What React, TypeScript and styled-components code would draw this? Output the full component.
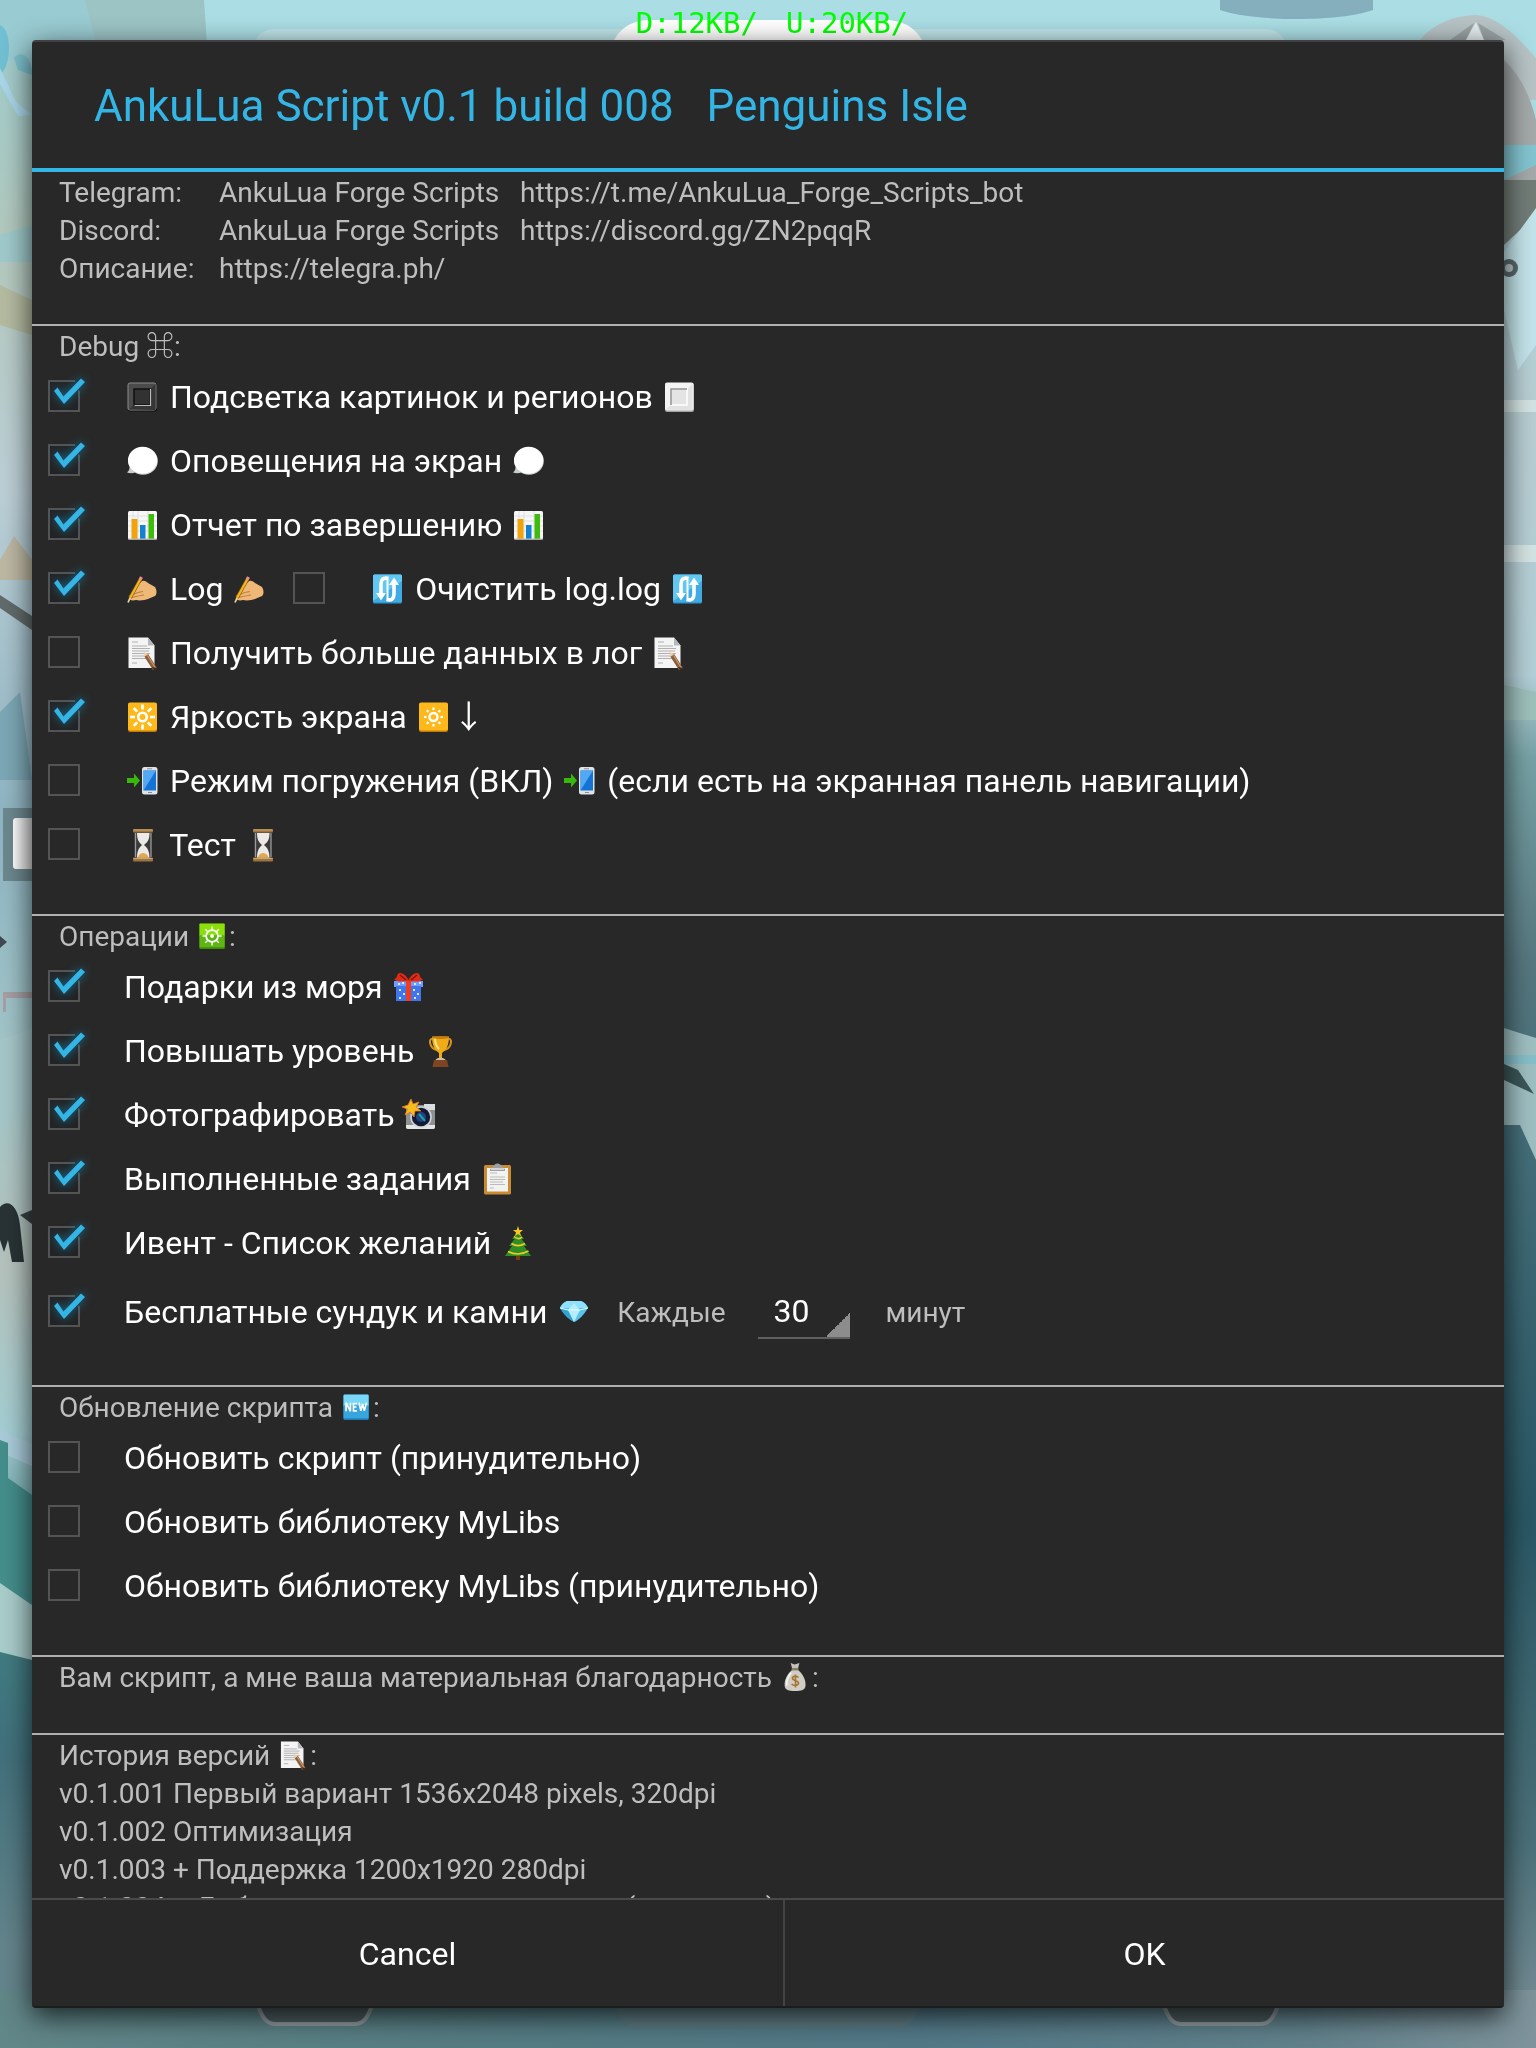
import React, { useState } from "react";
import styled, { createGlobalStyle } from "styled-components";

const GlobalStyle = createGlobalStyle`
  * { box-sizing: border-box; }
  body {
    margin: 0;
    background: #7fa9b0;
    font-family: Roboto, "Noto Sans CJK JP", "DejaVu Sans", sans-serif;
  }
`;

const Screen = styled.div`
  display: flex;
  flex-direction: column;
  height: 100vh;
  padding: 0 32px 40px;
  isolation: isolate;
`;

const Backdrop = styled.svg`
  position: fixed;
  inset: 0;
  width: 100%;
  height: 100%;
  z-index: -1;
`;

const StatusBar = styled.header`
  flex: none;
  display: flex;
  justify-content: center;
  gap: 28px;
  height: 40px;
  padding: 4px 0 0 8px;
  font: 29px/38px "DejaVu Sans Mono", monospace;
  color: #00ff00;
`;

const Dialog = styled.form`
  flex: 1;
  min-height: 0;
  display: flex;
  flex-direction: column;
  border-radius: 4px;
  border-top: 2px solid #414143;
  border-bottom: 2px solid #1b1c1c;
  background: #282828;
  box-shadow: 0 8px 28px rgba(0, 0, 0, 0.75);
  color: #fff;
`;

const Title = styled.h1`
  flex: none;
  margin: 0;
  padding: 2px 62px 0;
  border-bottom: 4px solid #33b5e5;
  font-size: 44px;
  font-weight: 400;
  line-height: 124px;
  white-space: pre-wrap;
  color: #33b5e5;
`;

const Body = styled.div`
  flex: 1;
  min-height: 0;
  overflow-y: auto;
  scrollbar-width: none;
`;

const Section = styled.section<{ $last?: boolean }>`
  padding-bottom: 38px;
  border-bottom: ${(p) => (p.$last ? "0" : "2px solid #b0b0b0")};
`;

const SmallText = styled.p`
  margin: 0;
  padding: 4px 27px 0;
  font-size: 28px;
  line-height: 34px;
  white-space: pre-wrap;
  color: #bebebe;
`;

const SectionTitle = styled(SmallText).attrs({ as: "h2" })`
  font-weight: 400;
`;

const Contacts = styled.dl`
  display: grid;
  grid-template-columns: 160px 1fr;
  margin: 0;
  padding: 0 27px;
  font-size: 28px;
  line-height: 34px;
  color: #bebebe;
`;

const Term = styled.dt`
  padding-top: 4px;
`;

const Detail = styled.dd`
  margin: 0;
  padding-top: 4px;
  white-space: pre-wrap;
`;

const PlainLink = styled.a`
  color: inherit;
  text-decoration: none;
`;

const Row = styled.div<{ $tall?: boolean }>`
  display: flex;
  align-items: center;
  gap: 24px;
  height: ${(p) => (p.$tall ? 73 : 64)}px;
  padding-left: 16px;
`;

const Option = styled.label`
  display: flex;
  align-items: center;
  gap: 44px;
  font-size: 32px;
  line-height: 38px;
  white-space: pre;
`;

const OptionText = styled.span`
  padding-top: 2px;
`;

const BoxWrap = styled.span`
  position: relative;
  display: block;
  width: 32px;
  height: 32px;
`;

const Box = styled.input`
  appearance: none;
  display: block;
  width: 32px;
  height: 32px;
  margin: 0;
  border: 2px solid #545454;

  &:checked {
    background: #222425;
  }
  &:not(:checked) + svg {
    display: none;
  }
`;

const Tick = styled.svg`
  position: absolute;
  left: 0;
  top: 0;
  width: 32px;
  height: 32px;
  overflow: visible;
  pointer-events: none;
`;

const Glow = styled.path`
  filter: drop-shadow(0 0 5px rgba(20, 150, 205, 0.7));
`;

const Glyph = styled.svg<{ $small?: boolean }>`
  display: inline-block;
  width: ${(p) => (p.$small ? 33 : 38)}px;
  height: ${(p) => (p.$small ? 28 : 32)}px;
  vertical-align: ${(p) => (p.$small ? -4 : -5)}px;
  overflow: visible;
`;

const Interval = styled.div`
  display: flex;
  align-items: baseline;
  font-size: 28px;
  color: #bebebe;
`;

const Spinner = styled.select`
  appearance: none;
  width: 92px;
  height: 56px;
  margin: 0 36px 0 32px;
  padding: 2px 0 0 16px;
  border: 0;
  border-bottom: 2px solid #606060;
  border-radius: 0;
  background: linear-gradient(135deg, transparent 50%, #8c8c8c 50%) right bottom / 24px 24px
    no-repeat;
  font: 32px Roboto, sans-serif;
  color: #fff;
`;

const Footer = styled.footer`
  flex: none;
  display: flex;
  border-top: 2px solid #4a4a4a;
`;

const FooterButton = styled.button<{ $grow: number; $divided?: boolean }>`
  flex: ${(p) => p.$grow} 1 0;
  height: 106px;
  padding: 2px 0 0;
  border: 0;
  border-right: ${(p) => (p.$divided ? "2px solid #444" : "0")};
  background: none;
  font: 32px Roboto, sans-serif;
  color: #fff;
`;

type IconName =
  | "darkSquare" | "lightSquare" | "bubble" | "chart" | "hand" | "reload" | "memo"
  | "sun" | "dim" | "phone" | "glass" | "gear" | "gift" | "cup" | "camera"
  | "clipboard" | "tree" | "gem" | "fresh" | "money";

const rays = (inner: number, outer: number, width: number) =>
  [0, 45, 90, 135, 180, 225, 270, 315].map((a) => (
    <path
      key={a}
      d={`M18.5 ${16 - inner}V${16 - outer}`}
      stroke="#fff"
      strokeWidth={width}
      transform={`rotate(${a} 18.5 16)`}
    />
  ));

const drawings: Record<IconName, React.ReactNode> = {
  darkSquare: (
    <>
      <rect x="4" y="2" width="29" height="28.5" rx="2" fill="#111" />
      <rect x="4" y="2" width="28" height="27" rx="2" fill="#4b4b4b" stroke="#8a8a8a" strokeWidth="1" />
      <path d="M5 28.500L31.500 3V29Z" fill="#363636" />
      <rect x="10" y="8" width="16" height="16" fill="#323232" stroke="#111" strokeWidth="1.500" />
      <path d="M10.500 24.500H26.500V8" fill="none" stroke="#bbb" strokeWidth="1.200" />
    </>
  ),
  lightSquare: (
    <>
      <rect x="4" y="2" width="29" height="29" rx="2" fill="#a4a4a4" />
      <rect x="4" y="1.500" width="28.500" height="28" rx="2" fill="#f4f4f4" />
      <path d="M5 28.500L31.500 3V29Z" fill="#e2e2e2" />
      <rect x="10" y="8" width="16" height="16" fill="#e4e4e4" stroke="#fff" strokeWidth="1.500" />
      <path d="M10 24V8H26" fill="none" stroke="#8e8e8e" strokeWidth="1.500" />
    </>
  ),
  bubble: (
    <>
      <path d="M3 27.500C5 26 5.500 24 5.500 22L12 27C9 28.500 6 28.500 3 27.500Z" fill="#c9cdcf" />
      <ellipse cx="19" cy="16" rx="14.800" ry="13.800" fill="#cfd2d4" />
      <ellipse cx="18.600" cy="15.300" rx="14.600" ry="13.500" fill="#fff" />
    </>
  ),
  chart: (
    <>
      <rect x="4" y="2" width="29" height="28.500" rx="1.500" fill="#f7f7f7" />
      <path d="M4 7H33M4 12H33M4 17H33M4 22H33M9 2V30M14 2V30M24 2V30" stroke="#dcdcdc" strokeWidth=".8" />
      <rect x="7.500" y="10" width="6" height="20" fill="#f0a30a" />
      <rect x="16" y="16" width="5.500" height="14" fill="#1181d0" />
      <rect x="24.500" y="5" width="5.500" height="25" fill="#3fbb0c" />
      <path d="M4 30H33" stroke="#bbb" strokeWidth="1" />
    </>
  ),
  hand: (
    <>
      <path
        d="M7 21C9 17 12 12 16 10C19 6 22 8 24 10L31 14C33 17 33 21 31 23L24 26C21 27 16 28 12 27C8 28 5 27 6 25C4 24 5 22 7 21Z"
        fill="#efb877"
      />
      <path d="M9 21.500C13 19.500 15 19 19 18.500M8 24.500C12 23.500 16 22.500 20 22" fill="none" stroke="#bf7f40" strokeWidth="1.200" />
      <path d="M16.500 6L6 25" stroke="#8a5a10" strokeWidth="3.600" />
      <path d="M16.500 6L6 25" stroke="#f3b81c" strokeWidth="2.200" />
      <path d="M6 25L4 29.500" stroke="#e6cfa0" strokeWidth="1.800" />
      <path d="M17.500 4L16.200 6.500" stroke="#ef8a90" strokeWidth="3.200" />
    </>
  ),
  reload: (
    <>
      <rect x="4" y="1.500" width="29" height="29" rx="1.500" fill="#2f98d4" />
      <rect x="4" y="1.500" width="29" height="27" rx="1.500" fill="#62c8f1" />
      <path d="M4 28L33 8V27Q33 28.500 31 28.500H4Z" fill="#3fabe2" />
      <path d="M19.500 5.500C14 4 12 7 12 11V21" fill="none" stroke="#fff" strokeWidth="3.600" />
      <path d="M7 20H17L12 27.500Z" fill="#fff" />
      <path d="M17.500 26.500C23 28 25 25 25 21V11" fill="none" stroke="#fff" strokeWidth="3.600" />
      <path d="M20 12H30L25 4.500Z" fill="#fff" />
      <path d="M18.500 6V26" stroke="#fff" strokeWidth="2" />
    </>
  ),
  memo: (
    <>
      <path d="M4.500 .5H24L30.500 8.500V31H4.500Z" fill="#f4f4f4" />
      <path d="M24 .5V8.500H30.500Z" fill="#b5b9bc" />
      <path d="M8 5H14M8 9H23M8 11.500H26M8 14H25M8 16.500H26M8 19H24M8 21.500H25M8 26H13" stroke="#b0b0b0" strokeWidth="1.100" />
      <path d="M22 18L31 32" stroke="#8b5e3c" strokeWidth="4.500" />
      <path d="M23.500 18.500L32 32" stroke="#c99a6b" strokeWidth="1.200" />
      <path d="M19.500 14.500L20 20L24 17.500Z" fill="#edcfa3" />
      <path d="M28 30L31 34.500L33 31" fill="#3a2a20" />
    </>
  ),
  sun: (
    <>
      <rect x="4" y="2" width="29" height="29" rx="2" fill="#c47a08" />
      <rect x="4" y="1.500" width="29" height="28" rx="2" fill="#fdb91c" />
      <circle cx="18.500" cy="16" r="4.300" fill="none" stroke="#fff" strokeWidth="2.600" />
      {rays(7.5, 12.5, 2.6)}
    </>
  ),
  dim: (
    <>
      <rect x="4" y="2" width="29" height="29" rx="2" fill="#c47a08" />
      <rect x="4" y="1.500" width="29" height="28" rx="2" fill="#fdb91c" />
      <circle cx="18.500" cy="16" r="4" fill="none" stroke="#fff" strokeWidth="2.400" />
      {rays(7, 9.5, 2.2)}
    </>
  ),
  phone: (
    <>
      <path d="M3 13H10V8.500L16 15.500L10 22.500V18H3Z" fill="#38b80c" />
      <rect x="18" y="2" width="15.500" height="27.500" rx="2.500" fill="#dfe3e6" />
      <rect x="19.500" y="5.500" width="12.500" height="20" fill="#1473d4" />
      <path d="M19.500 25.500V5.500H32Z" fill="#52a8f2" />
      <path d="M23 3.800H28M24 27.500H28" stroke="#8a8f94" strokeWidth="1" />
    </>
  ),
  glass: (
    <>
      <path d="M10.500 3H27V29H10.500Z" fill="#3b3b3b" />
      <path d="M11.500 4V28M27 4V28" stroke="#9a9a9a" strokeWidth="1.300" />
      <path d="M13 4H25.500C25.500 10 24 13 20 16C24 19 25.500 23 25.500 29H13C13 23 14.500 19 18 16C14.500 13 13 10 13 4Z" fill="#eceae6" />
      <path d="M14 28.500C15 22.500 23 22.500 24.500 28.500Z" fill="#e5a94c" />
      <rect x="9" y="0" width="20" height="3.500" rx="1" fill="#9c7440" />
      <rect x="9" y="28.500" width="20" height="4" rx="1" fill="#9c7440" />
      <path d="M9.500 1H28.500M9.500 29.500H28.500" stroke="#cfa66c" strokeWidth="1" />
    </>
  ),
  gear: (
    <>
      <rect x="4" y="2" width="29" height="29" rx="1" fill="#3f8c0c" />
      <rect x="4" y="1.500" width="29" height="15" rx="1" fill="#8be00a" />
      <rect x="4" y="15" width="29" height="14" fill="#5fb514" />
      <circle cx="18.500" cy="16" r="6.800" fill="none" stroke="#fff" strokeWidth="2" />
      {rays(7, 11, 1.6)}
      <circle cx="18.500" cy="16" r="2.200" fill="#fff" />
    </>
  ),
  gift: (
    <>
      <rect x="4" y="10" width="29" height="6" fill="#6f9dff" />
      <rect x="6" y="15" width="25" height="15" fill="#3f76ee" />
      <path d="M8 13h2M12 12h2M24 13h2M29 12h2M9 19h2M13 23h2M9 27h2M23 19h2M27 23h2M24 27h2" stroke="#dbe7ff" strokeWidth="2" />
      <rect x="16" y="10" width="5" height="20" fill="#ef3d1e" />
      <path d="M18 10C12 11 6 11 4 8C8 8 6 2 10 2C14 2 17 6 18.500 9C20 6 23 2 27 2C31 2 29 8 33 8C31 11 25 11 18 10Z" fill="#e02c14" />
      <path d="M10 4L16 9M27 4L21 9" stroke="#7c1209" strokeWidth="1.200" />
    </>
  ),
  cup: (
    <>
      <path d="M10 4C6 4 8 14 15 15M27 4C31 4 29 14 22 15" fill="none" stroke="#d8921a" strokeWidth="2" />
      <path d="M10 1.500H27C27 11 24 15 20 18V23H17V18C13 15 10 11 10 1.500Z" fill="#f0ac18" />
      <path d="M13 3C13 9 15 12 17 14" fill="none" stroke="#ffe48a" strokeWidth="2" />
      <ellipse cx="18.500" cy="2.500" rx="8.500" ry="1.500" fill="#c47c0c" />
      <path d="M13.500 25C15 22 22 22 23.500 25Z" fill="#c9c3a8" />
      <path d="M12 25H25L26.500 32H10.500Z" fill="#7f4523" />
    </>
  ),
  camera: (
    <>
      <rect x="4" y="6" width="29" height="24" rx="2" fill="#8c9093" />
      <path d="M4 26H33V28Q33 30 31 30H6Q4 30 4 28Z" fill="#e4e6e8" />
      <path d="M22 5H33V11H22Z" fill="#dadde0" />
      <circle cx="19" cy="18" r="10.800" fill="#d2d5d8" />
      <circle cx="19" cy="18" r="9.200" fill="#121a35" />
      <circle cx="19" cy="18" r="5" fill="#24427e" />
      <path d="M17 15L23 22" stroke="#1aa3a6" strokeWidth="2" />
      <path d="M9 0L11 5L17 3L14 8L19 12L13 12L12 18L8.500 13L3 16L5.500 10L0 8L6 6Z" fill="#f7bd1d" stroke="#e0782a" strokeWidth=".8" />
    </>
  ),
  clipboard: (
    <>
      <rect x="5" y="2" width="27" height="29.500" rx="1.500" fill="#c98c35" />
      <rect x="8" y="5" width="21" height="23.500" fill="#f2f2f0" />
      <path d="M11 10H18M11 14H26M11 16.500H26M11 19H24M11 21.500H26M11 25H15" stroke="#bbb" strokeWidth="1.100" />
      <path d="M11 6L15 3C15-.5 22-.5 22 3L26 6V8H11Z" fill="#9da1a4" />
      <path d="M12 6H25" stroke="#e4e6e8" strokeWidth="1.500" />
    </>
  ),
  tree: (
    <>
      <rect x="17" y="27" width="4" height="6" fill="#7a3b12" />
      <path d="M19 4L25 12H22.500L28 19H25L32 29H6L13 19H10L15.500 12H13Z" fill="#2f8d23" />
      <path d="M15 9.500C18 12 21 12 23 10M12.500 16.500C17 19.500 22 19 26 16.500M9 24.500C16 28 24 27 29.500 24" fill="none" stroke="#f0cb2e" strokeWidth="1.600" />
      <path d="M19-1L20.300 3L24 3L21 5.500L22 9L19 7L16 9L17 5.500L14 3L17.700 3Z" fill="#f9c51e" />
    </>
  ),
  gem: (
    <>
      <path d="M12 5H26Q31 7 33 12Q27 22 19.500 26Q11 22 5 12Q7 7 12 5Z" fill="#59c3ec" />
      <path d="M12 5H26Q31 7 33 12H5Q7 7 12 5Z" fill="#8fe0fa" />
      <path d="M5 12L13 14L19 26Q11 22 5 12Z" fill="#2fa3d6" />
      <path d="M13 14L19 7L25 14L19 26Z" fill="#b5edfd" />
      <path d="M5 12L13 14H25L33 12" fill="none" stroke="#e6fbff" strokeWidth="1" />
    </>
  ),
  fresh: (
    <>
      <rect x="4" y="2" width="29" height="29" rx="1.500" fill="#1c7fba" />
      <rect x="4" y="1.500" width="29" height="14" rx="1.500" fill="#79d8f8" />
      <rect x="4" y="14" width="29" height="15" fill="#38a5de" />
      <path d="M7 21V11L12 21V11M19.500 12H15.500V20.500H19.500M15.500 16H19M22 11L24 20.500L26 12.500L28 20.500L30.500 11" fill="none" stroke="#fff" strokeWidth="1.900" />
    </>
  ),
  money: (
    <>
      <path d="M15 8C9 13 6 20 6.500 26C7 31 11 32 18.500 32C26 32 30 31 30.500 26C31 20 28 13 22 8Z" fill="#cfcdc6" />
      <path d="M14 11C10 16 8.500 21 9 26" fill="none" stroke="#f3f2ee" strokeWidth="2" />
      <path d="M13.500 0L18 1.500L23.500 0L22 6H15Z" fill="#c4c1b8" />
      <rect x="14.500" y="5.500" width="8" height="3" rx="1" fill="#8a7f66" />
      <path d="M22.500 16.500C20 14 15.500 15 15.500 17.500C15.500 21 22.500 19.500 22.500 23C22.500 26 17 26.500 14.500 24M19 13V28" fill="none" stroke="#a5752a" strokeWidth="1.800" />
    </>
  ),
};

const Icon = ({ name, small }: { name: IconName; small?: boolean }) => (
  <Glyph $small={small} viewBox="0 0 38 32" aria-hidden="true">
    {drawings[name]}
  </Glyph>
);

const Check = ({ initial = false, children }: { initial?: boolean; children: React.ReactNode }) => {
  const [on, setOn] = useState(initial);
  const mark = "M6 11L9.500 7.500L15.500 16.500L33-1.500L37 2L16 24Z";
  return (
    <Option>
      <BoxWrap>
        <Box type="checkbox" checked={on} onChange={(e) => setOn(e.target.checked)} />
        <Tick viewBox="0 0 32 32" aria-hidden="true">
          <path d="M27-1H33V12L27 8Z" fill="#26292a" />
          <Glow d={mark} fill="#33b5e5" />
        </Tick>
      </BoxWrap>
      <OptionText>{children}</OptionText>
    </Option>
  );
};

const Scenery = () => (
  <Backdrop viewBox="0 0 1536 2048" preserveAspectRatio="none" aria-hidden="true">
    <defs>
      <linearGradient id="left" x1="0" y1="0" x2="0" y2="1">
        <stop offset="0" stopColor="#9ccdd0" />
        <stop offset=".12" stopColor="#b3c8bd" />
        <stop offset=".24" stopColor="#bccfd6" />
        <stop offset=".4" stopColor="#8fb4c2" />
        <stop offset=".52" stopColor="#a3c6c9" />
        <stop offset=".62" stopColor="#b5c2bc" />
        <stop offset=".7" stopColor="#a3cdd2" />
        <stop offset=".78" stopColor="#3f8184" />
        <stop offset=".86" stopColor="#42707b" />
        <stop offset=".95" stopColor="#64848c" />
        <stop offset="1" stopColor="#64858a" />
      </linearGradient>
      <linearGradient id="right" x1="0" y1="0" x2="0" y2="1">
        <stop offset="0" stopColor="#a9dfe7" />
        <stop offset=".2" stopColor="#b7cdd2" />
        <stop offset=".33" stopColor="#b3ced6" />
        <stop offset=".37" stopColor="#76a2a5" />
        <stop offset=".47" stopColor="#56777f" />
        <stop offset=".57" stopColor="#426d78" />
        <stop offset=".74" stopColor="#295764" />
        <stop offset=".9" stopColor="#4b7079" />
        <stop offset="1" stopColor="#7e939b" />
      </linearGradient>
      <linearGradient id="bottom" x1="0" y1="0" x2="1" y2="0">
        <stop offset="0" stopColor="#628789" />
        <stop offset=".3" stopColor="#557c82" />
        <stop offset=".6" stopColor="#527887" />
        <stop offset=".85" stopColor="#61818b" />
        <stop offset="1" stopColor="#7e939b" />
      </linearGradient>
      <linearGradient id="bar" x1="0" y1="0" x2="1" y2="0">
        <stop offset="0" stopColor="#fff" />
        <stop offset="1" stopColor="#b8b8b8" />
      </linearGradient>
    </defs>
    <rect width="768" height="2048" fill="url(#left)" />
    <rect x="768" width="768" height="2048" fill="url(#right)" />
    <rect y="1990" width="1536" height="58" fill="url(#bottom)" />

    <rect width="1536" height="60" fill="#aadde4" />
    <path d="M0 0H204L208 60H0Z" fill="#9cc4c5" />
    <path d="M0 0H85L100 60H0Z" fill="#99cbd2" />
    <path d="M250 60C252 40 260 29 275 29H1265C1280 29 1288 40 1290 60Z" fill="#bfe4e8" />
    <path d="M614 40C622 26 634 20 650 20H885C901 20 914 26 922 40Z" fill="#fff" />
    <path d="M1220 0H1373V10C1340 22 1255 22 1220 10Z" fill="#86afbd" />

    <path d="M0 25C12 30 12 65 0 75Z" fill="#71bfd2" />
    <path d="M14 58C20 50 32 55 32 75L18 70Z" fill="#7cc0cd" />
    <path d="M0 68L16 102L32 115L18 116L0 84Z" fill="#a9d5e8" />
    <path d="M0 235L32 225V262H0Z" fill="#9fc9cb" />
    <path d="M0 285L32 300V335L0 325Z" fill="#b4bba0" />
    <path d="M0 560L14 536L32 560V580H0Z" fill="#bdb8a3" />
    <path d="M0 595L32 616V630L0 608Z" fill="#626b6b" />
    <path d="M0 712L20 692L32 780H0Z" fill="#7ca7b5" />
    <rect x="3" y="808" width="40" height="73" fill="#6c888e" />
    <rect x="13" y="818" width="30" height="51" rx="3" fill="url(#bar)" />
    <path d="M0 936L7 942L0 948Z" fill="#414a52" />
    <path d="M0 1040L32 1028V1105L0 1130Z" fill="#a5c6c8" />
    <path d="M3 992H32V998H6V1012H3Z" fill="#a69fa3" />
    <path d="M0 1207C8 1198 18 1206 20 1225L24 1262H12L8 1240L4 1252L0 1240Z" fill="#293336" />
    <path d="M20 1215L32 1210V1224Z" fill="#3b4245" />
    <path d="M0 1430L32 1444V1466L0 1452Z" fill="#a9cbd9" />
    <path d="M0 1440L8 1443V1478L32 1495V1605L0 1583Z" fill="#448e8c" />
    <path d="M0 1583L32 1605V1660L0 1652Z" fill="#a9cdcb" />

    <path d="M1420 40C1435 22 1455 16 1476 15C1500 17 1520 40 1536 58V100H1420Z" fill="#b7c3c5" />
    <path d="M1450 40L1474 23L1466 40ZM1484 40L1478 23L1506 40Z" fill="#9aa3a5" />
    <path d="M1466 40L1476 22L1484 40Z" fill="#e3edef" />
    <path d="M1504 60C1520 75 1530 95 1536 120V180H1504Z" fill="#a4a9a9" />
    <path d="M1504 145H1536V165L1504 180Z" fill="#83c4d0" />
    <path d="M1504 180H1536V215L1504 245Z" fill="#727d78" />
    <path d="M1504 252L1536 208V345L1518 370L1504 310Z" fill="#c3e4ea" />
    <circle cx="1509" cy="268" r="9" fill="#596a6e" />
    <circle cx="1509" cy="268" r="4" fill="#b9c8cb" />
    <path d="M1504 400H1536V412H1504ZM1504 545H1536V562H1504Z" fill="#d3e2e2" />
    <path d="M1504 685L1536 692V720H1504Z" fill="#9dc0bb" />
    <path d="M1504 1028L1536 1038V1160L1520 1125H1504Z" fill="#9ebfc2" />
    <path d="M1504 1064L1518 1070L1534 1094L1504 1080Z" fill="#3c5759" />
    <path d="M1504 1055H1536V1064H1504Z" fill="#86bfca" />

    <path d="M256 2000C262 2018 266 2024 276 2024H354C364 2024 368 2018 374 2000" fill="#4c5b5f" stroke="#8d989b" strokeWidth="4" />
    <path d="M615 2007H920C914 2022 908 2027 895 2027H640C627 2027 620 2022 615 2007Z" fill="#5d7a80" />
    <path d="M1162 2000C1168 2018 1172 2024 1182 2024H1260C1270 2024 1274 2018 1280 2000" fill="#4c5b5f" stroke="#8d989b" strokeWidth="4" />
  </Backdrop>
);

export default function App() {
  const [minutes, setMinutes] = useState("30");
  return (
    <Screen>
      <GlobalStyle />
      <Scenery />
      <StatusBar>
        <span>D:12KB/</span>
        <span>U:20KB/</span>
      </StatusBar>
      <Dialog onSubmit={(e) => e.preventDefault()}>
        <Title>{"AnkuLua Script v0.1 build 008   Penguins Isle"}</Title>
        <Body>
          <Section>
            <Contacts>
              <Term>Telegram:</Term>
              <Detail>
                {"AnkuLua Forge Scripts   "}
                <PlainLink href="https://t.me/AnkuLua_Forge_Scripts_bot">https://t.me/AnkuLua_Forge_Scripts_bot</PlainLink>
              </Detail>
              <Term>Discord:</Term>
              <Detail>
                {"AnkuLua Forge Scripts   "}
                <PlainLink href="https://discord.gg/ZN2pqqR">https://discord.gg/ZN2pqqR</PlainLink>
              </Detail>
              <Term>Описание:</Term>
              <Detail>
                <PlainLink href="https://telegra.ph/">https://telegra.ph/</PlainLink>
              </Detail>
            </Contacts>
          </Section>

          <Section>
            <SectionTitle>Debug ⌘:</SectionTitle>
            <Row>
              <Check initial>
                <Icon name="darkSquare" /> Подсветка картинок и регионов <Icon name="lightSquare" />
              </Check>
            </Row>
            <Row>
              <Check initial>
                <Icon name="bubble" /> Оповещения на экран <Icon name="bubble" />
              </Check>
            </Row>
            <Row>
              <Check initial>
                <Icon name="chart" /> Отчет по завершению <Icon name="chart" />
              </Check>
            </Row>
            <Row>
              <Check initial>
                <Icon name="hand" /> Log <Icon name="hand" />
              </Check>
              <Check>
                <Icon name="reload" /> Очистить log.log <Icon name="reload" />
              </Check>
            </Row>
            <Row>
              <Check>
                <Icon name="memo" /> Получить больше данных в лог <Icon name="memo" />
              </Check>
            </Row>
            <Row>
              <Check initial>
                <Icon name="sun" /> Яркость экрана <Icon name="dim" />↓
              </Check>
            </Row>
            <Row>
              <Check>
                <Icon name="phone" /> Режим погружения (ВКЛ) <Icon name="phone" /> (если есть на экранная панель навигации)
              </Check>
            </Row>
            <Row>
              <Check>
                <Icon name="glass" /> Тест <Icon name="glass" />
              </Check>
            </Row>
          </Section>

          <Section>
            <SectionTitle>
              Операции <Icon name="gear" small />:
            </SectionTitle>
            <Row>
              <Check initial>
                Подарки из моря <Icon name="gift" />
              </Check>
            </Row>
            <Row>
              <Check initial>
                Повышать уровень <Icon name="cup" />
              </Check>
            </Row>
            <Row>
              <Check initial>
                Фотографировать <Icon name="camera" />
              </Check>
            </Row>
            <Row>
              <Check initial>
                Выполненные задания <Icon name="clipboard" />
              </Check>
            </Row>
            <Row>
              <Check initial>
                Ивент - Список желаний <Icon name="tree" />
              </Check>
            </Row>
            <Row $tall>
              <Check initial>
                Бесплатные сундук и камни <Icon name="gem" />
              </Check>
              <Interval>
                <label htmlFor="interval">Каждые</label>
                <Spinner id="interval" value={minutes} onChange={(e) => setMinutes(e.target.value)}>
                  <option>15</option>
                  <option>30</option>
                  <option>60</option>
                </Spinner>
                <span>минут</span>
              </Interval>
            </Row>
          </Section>

          <Section>
            <SectionTitle>
              Обновление скрипта <Icon name="fresh" small />:
            </SectionTitle>
            <Row>
              <Check>Обновить скрипт (принудительно)</Check>
            </Row>
            <Row>
              <Check>Обновить библиотеку MyLibs</Check>
            </Row>
            <Row>
              <Check>Обновить библиотеку MyLibs (принудительно)</Check>
            </Row>
          </Section>

          <Section>
            <SectionTitle>
              Вам скрипт, а мне ваша материальная благодарность <Icon name="money" small />:
            </SectionTitle>
          </Section>

          <Section $last>
            <SectionTitle>
              История версий <Icon name="memo" small />:
            </SectionTitle>
            <SmallText>v0.1.001 Первый вариант 1536x2048 pixels, 320dpi</SmallText>
            <SmallText>v0.1.002 Оптимизация</SmallText>
            <SmallText>v0.1.003 + Поддержка 1200x1920 280dpi</SmallText>
            <SmallText>v0.1.004 + Добавлено извещение на экран (на экране)</SmallText>
          </Section>
        </Body>
        <Footer>
          <FooterButton type="button" $grow={752} $divided>
            Cancel
          </FooterButton>
          <FooterButton type="submit" $grow={720}>
            OK
          </FooterButton>
        </Footer>
      </Dialog>
    </Screen>
  );
}
